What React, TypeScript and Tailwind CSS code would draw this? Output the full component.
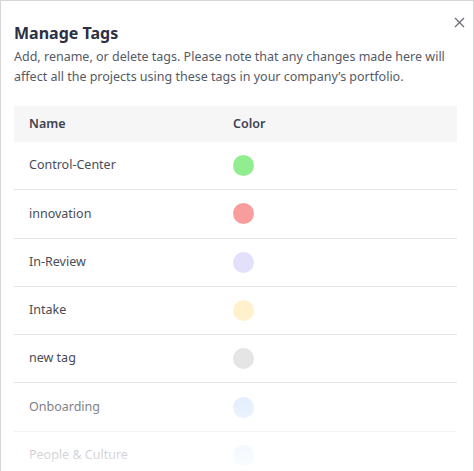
const tags = [
  { name: "Control-Center", color: "bg-[#90ee90]" },
  { name: "innovation", color: "bg-[#f89d9d]" },
  { name: "In-Review", color: "bg-[#e3e0fc]" },
  { name: "Intake", color: "bg-[#fff1cc]" },
  { name: "new tag", color: "bg-[#e5e5e5]" },
  { name: "Onboarding", color: "bg-[#dcebfc]" },
  { name: "People & Culture", color: "bg-[#dcebfc]" },
  { name: "Product", color: "bg-[#dcebfc]" },
];

const App = () => {
  return (
    <div className="w-[474px] h-[471px] overflow-hidden bg-white font-['Noto_Sans',sans-serif]">
      <div className="relative h-full border border-b-0 border-[#d6d6d6] pl-[13px] pr-[16px] pt-[21px]">
        <button className="absolute right-[4px] top-[12px] p-1 text-[#6b6f7a]">
          <svg width="11" height="11" viewBox="0 0 11 11" fill="none" stroke="currentColor" strokeWidth="1.3">
            <path d="M1 1L10 10M10 1L1 10" />
          </svg>
        </button>

        <h2 className="text-[16px] leading-[22px] font-bold text-[#2b3044]">Manage Tags</h2>
        <p className="mt-[3px] text-[12.5px] leading-[19.5px] text-[#555a66]">
          Add, rename, or delete tags. Please note that any changes made here will affect all the projects using these tags in your company’s portfolio.
        </p>

        <div className="mt-[20px]">
          <div className="flex items-center h-[36px] bg-[#f6f6f6] text-[12.5px] font-semibold text-[#3d4252]">
            <div className="w-[219px] pl-[15px]">Name</div>
            <div>Color</div>
          </div>
          {tags.map((t) => (
            <div
              key={t.name}
              className="flex items-center h-[48.3px] border-b border-[#e4e4e4] text-[12.5px] text-[#474c58]"
            >
              <div className="w-[219px] pl-[15px]">{t.name}</div>
              <div className={`w-[21px] h-[21px] rounded-full ${t.color}`} />
            </div>
          ))}
        </div>

        <div className="pointer-events-none absolute left-0 right-0 bottom-0 h-[90px] bg-gradient-to-b from-white/0 via-white/50 to-white/90" />
      </div>
    </div>
  );
};

export default App;
